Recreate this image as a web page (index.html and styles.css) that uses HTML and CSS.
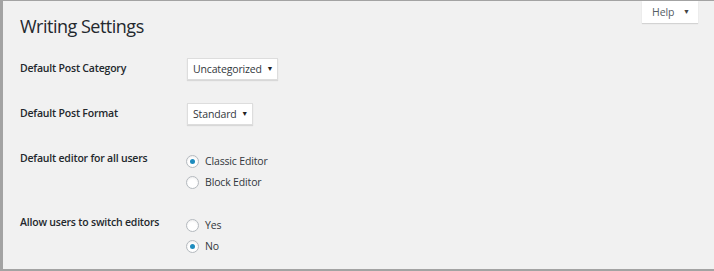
FILE: index.html
```html
<!DOCTYPE html>
<html>
<head>
<meta charset="utf-8">
<link rel="stylesheet" href="styles.css">
</head>
<body>
<div class="frame">
  <div class="help-wrap"><button class="help-tab">Help <span class="caret">▼</span></button></div>
  <h1 class="title">Writing Settings</h1>
  <div class="rows">
    <div class="row center">
      <div class="label">Default Post Category</div>
      <div class="field"><span class="select">Uncategorized <span class="caret">▼</span></span></div>
    </div>
    <div class="row center">
      <div class="label">Default Post Format</div>
      <div class="field"><span class="select">Standard <span class="caret">▼</span></span></div>
    </div>
    <div class="row">
      <div class="label">Default editor for all users</div>
      <div class="field radios">
        <label class="radio"><span class="dot checked"></span>Classic Editor</label>
        <label class="radio"><span class="dot"></span>Block Editor</label>
      </div>
    </div>
    <div class="row">
      <div class="label">Allow users to switch editors</div>
      <div class="field radios">
        <label class="radio"><span class="dot"></span>Yes</label>
        <label class="radio"><span class="dot checked"></span>No</label>
      </div>
    </div>
  </div>
</div>
</body>
</html>
```
FILE: styles.css
```css
html, body { margin: 0; padding: 0; }
body {
  width: 714px;
  height: 271px;
  background: #f1f1f1;
  font-family: "Open Sans", "Noto Sans", sans-serif;
  color: #23282d;
  overflow: hidden;
}
.frame {
  box-sizing: border-box;
  height: 271px;
  border-top: 1px solid #a3a3a3;
  border-left: 3px solid #a3a3a3;
  border-bottom: 2px solid #a3a3a3;
  padding: 0 0 0 17px;
  position: relative;
}
.help-wrap {
  position: absolute;
  top: 0;
  right: 16px;
}
.help-tab {
  display: block;
  background: #fff;
  border: none;
  box-shadow: 0 1px 1px rgba(0,0,0,0.12);
  font-family: inherit;
  font-size: 10.5px;
  letter-spacing: -0.1px;
  color: #555d66;
  width: 56px;
  height: 22px;
  padding: 0 0 1px 2px;
  text-align: center;
}
.help-tab .caret { font-size: 7px; margin-left: 6px; vertical-align: 2px; color: #444; }
.title {
  margin: 0;
  padding-top: 12px;
  font-size: 18px;
  letter-spacing: -0.5px;
  font-weight: 400;
  line-height: 26px;
  color: #23282d;
}
.rows { margin-top: 17px; }
.row {
  display: flex;
  align-items: flex-start;
}
.row.center { align-items: center; }
.label {
  width: 167px;
  font-size: 10.5px;
  letter-spacing: -0.2px;
  font-weight: 600;
}
.row:nth-child(1) { height: 23px; }
.row:nth-child(2) { height: 23px; margin-top: 22px; }
.row:nth-child(3) { margin-top: 27px; }
.row:nth-child(4) { margin-top: 24px; }
.select {
  display: inline-block;
  background: #fff;
  box-shadow: 0 1px 1px rgba(0,0,0,0.1);
  border: 1px solid #ddd;
  font-size: 10.5px;
  letter-spacing: -0.15px;
  line-height: 19px;
  padding: 0 4px 0 5px;
  color: #32373c;
}
.select .caret { font-size: 7px; margin-left: 2px; vertical-align: 2px; color: #222; }
.radios { display: flex; flex-direction: column; gap: 4px; margin-top: 2px; }
.radio {
  display: flex;
  align-items: center;
  font-size: 10.5px;
  letter-spacing: -0.15px;
  line-height: 17px;
  color: #32373c;
  margin-left: -1px;
}
.dot {
  box-sizing: border-box;
  width: 13px;
  height: 13px;
  border-radius: 50%;
  border: 1px solid #b4b9be;
  background: #fff;
  margin-right: 6px;
  display: flex;
  align-items: center;
  justify-content: center;
  box-shadow: inset 0 1px 2px rgba(0,0,0,0.07);
}
.dot.checked::after {
  content: "";
  width: 5px;
  height: 5px;
  border-radius: 50%;
  background: #1e8cbe;
}
```
